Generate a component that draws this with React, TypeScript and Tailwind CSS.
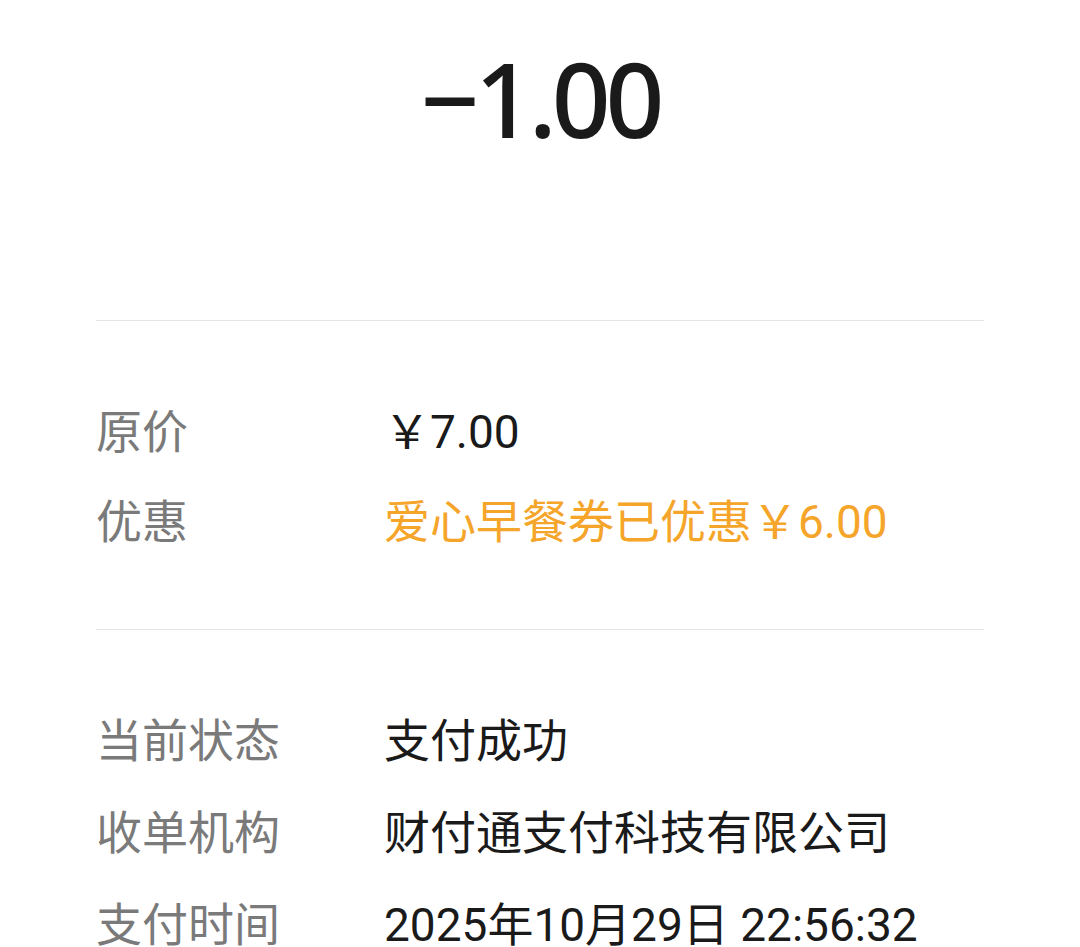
export default function App() {
  const font = { fontFamily: '"Roboto", "Noto Sans CJK SC", sans-serif' };
  return (
    <div className="w-[1080px] h-[947px] bg-white overflow-hidden" style={font}>
      <div className="flex justify-center pt-[34px] h-[320px]">
        <div className="text-[103px] leading-[128px] font-medium text-[#1a1a1a] tracking-[-5px] [font-family:'Noto_Sans',sans-serif]">−1.00</div>
      </div>
      <div className="mx-[96px] border-t border-[#e5e5e5]" />
      <div className="mx-[96px] pt-[66px] pb-[62px] text-[46px]">
        <div className="flex h-[90px] items-center">
          <div className="w-[288px] text-[#7a7a7a]">原价</div>
          <div className="text-[#1a1a1a]">￥7.00</div>
        </div>
        <div className="flex h-[90px] items-center">
          <div className="w-[288px] text-[#7a7a7a]">优惠</div>
          <div className="text-[#f5a52a]">爱心早餐券已优惠￥6.00</div>
        </div>
      </div>
      <div className="mx-[96px] border-t border-[#e5e5e5]" />
      <div className="mx-[96px] pt-[65px] text-[46px]">
        <div className="flex h-[92px] items-center">
          <div className="w-[288px] text-[#7a7a7a]">当前状态</div>
          <div className="text-[#1a1a1a]">支付成功</div>
        </div>
        <div className="flex h-[92px] items-center">
          <div className="w-[288px] text-[#7a7a7a]">收单机构</div>
          <div className="text-[#1a1a1a]">财付通支付科技有限公司</div>
        </div>
        <div className="flex h-[92px] items-center">
          <div className="w-[288px] text-[#7a7a7a]">支付时间</div>
          <div className="text-[#1a1a1a]">2025年10月29日 22:56:32</div>
        </div>
      </div>
    </div>
  );
}
